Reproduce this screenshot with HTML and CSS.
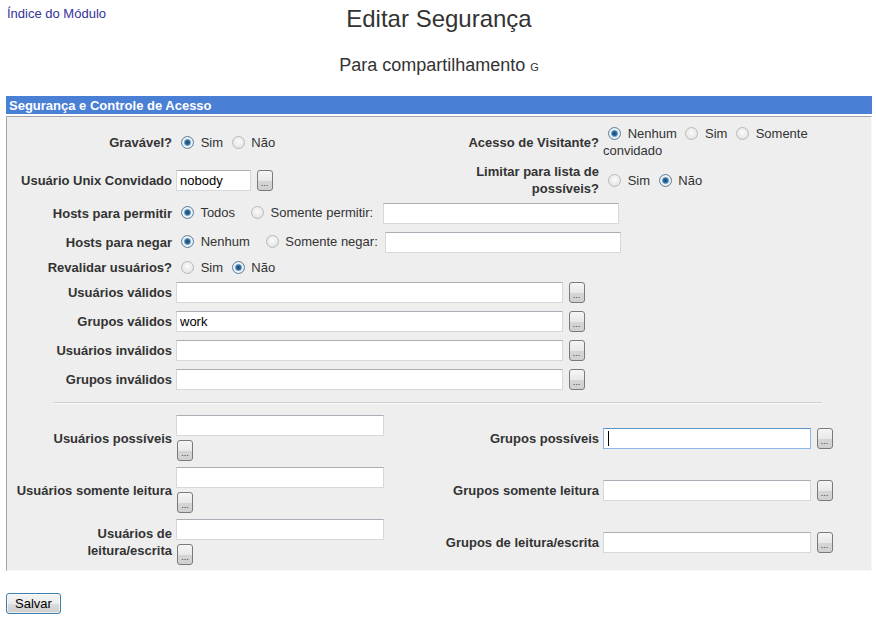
FILE: index.html
```html
<!DOCTYPE html>
<html lang="pt">
<head>
<meta charset="utf-8">
<title>Editar Segurança</title>
<link rel="stylesheet" href="styles.css">
</head>
<body>
<div class="page">
  <header class="top">
    <a class="index" href="#">Índice do Módulo</a>
    <h1 class="title">Editar Segurança</h1>
    <span></span>
  </header>
  <p class="subtitle">Para compartilhamento <small>G</small></p>

  <div class="bar">Segurança e Controle de Acesso</div>
  <div class="panel">
    <div class="l">Gravável?</div>
    <div class="v"><input class="r" type="radio" name="wr" checked> <label>Sim</label> <input class="r" type="radio" name="wr"> <label>Não</label></div>
    <div class="l">Acesso de Visitante?</div>
    <div class="v pr"><input class="r" type="radio" name="ga" checked> <label>Nenhum</label> <input class="r" type="radio" name="ga"> <label>Sim</label> <input class="r" type="radio" name="ga"> <label>Somente</label> <label>convidado</label></div>

    <div class="l">Usuário Unix Convidado</div>
    <div class="v"><input class="t w75" type="text" value="nobody"> <button class="dots">...</button></div>
    <div class="l">Limitar para lista de possíveis?</div>
    <div class="v"><input class="r" type="radio" name="lim"> <label>Sim</label> <input class="r" type="radio" name="lim" checked> <label>Não</label></div>

    <div class="l">Hosts para permitir</div>
    <div class="v wide"><input class="r" type="radio" name="ha" checked> <label>Todos</label> &nbsp; <input class="r" type="radio" name="ha"> <label>Somente permitir:</label> <input class="t w236 sp2" type="text"></div>

    <div class="l">Hosts para negar</div>
    <div class="v wide"><input class="r" type="radio" name="hd" checked> <label>Nenhum</label> &nbsp; <input class="r" type="radio" name="hd"> <label>Somente negar:</label> <input class="t w236 sp" type="text"></div>

    <div class="l">Revalidar usuários?</div>
    <div class="v wide"><input class="r" type="radio" name="rv"> <label>Sim</label> <input class="r" type="radio" name="rv" checked> <label>Não</label></div>

    <div class="l">Usuários válidos</div>
    <div class="v wide"><input class="t w387" type="text"> <button class="dots">...</button></div>

    <div class="l">Grupos válidos</div>
    <div class="v wide"><input class="t w387" type="text" value="work"> <button class="dots">...</button></div>

    <div class="l">Usuários inválidos</div>
    <div class="v wide"><input class="t w387" type="text"> <button class="dots">...</button></div>

    <div class="l">Grupos inválidos</div>
    <div class="v wide"><input class="t w387" type="text"> <button class="dots">...</button></div>

    <div class="sep"><i></i></div>

    <div class="l">Usuários possíveis</div>
    <div class="v stack"><input class="t w208" type="text"><button class="dots">...</button></div>
    <div class="l">Grupos possíveis</div>
    <div class="v"><span class="focus-wrap"><input class="t w208 focus" type="text"><span class="caret"></span></span> <button class="dots">...</button></div>

    <div class="l">Usuários somente leitura</div>
    <div class="v stack"><input class="t w208" type="text"><button class="dots">...</button></div>
    <div class="l">Grupos somente leitura</div>
    <div class="v"><input class="t w208" type="text"> <button class="dots">...</button></div>

    <div class="l">Usuários de leitura/escrita</div>
    <div class="v stack"><input class="t w208" type="text"><button class="dots">...</button></div>
    <div class="l">Grupos de leitura/escrita</div>
    <div class="v"><input class="t w208" type="text"> <button class="dots">...</button></div>
  </div>

  <button class="save">Salvar</button>
</div>
</body>
</html>
```
FILE: styles.css
```css
html, body {
  margin: 0;
  padding: 0;
  background: #fff;
}
body {
  font-family: "Liberation Sans", Arial, sans-serif;
  font-size: 13px;
  color: #333;
}
.page {
  padding: 0 4px 0 6px;
}
.top {
  display: grid;
  grid-template-columns: 1fr auto 1fr;
  align-items: start;
  padding-top: 5px;
}
.index {
  margin-top: 1px;
  margin-left: 1px;
  line-height: 15px;
  color: #333399;
  text-decoration: none;
  justify-self: start;
}
.title {
  margin: 0;
  font-size: 24px;
  font-weight: normal;
  line-height: 28px;
  color: #333;
}
.subtitle {
  margin: 22px 0 18px;
  text-align: center;
  font-size: 18px;
  line-height: 21px;
  color: #333;
}
.subtitle small {
  font-size: 11px;
}
.bar {
  height: 18px;
  box-sizing: border-box;
  padding: 2px 3px 1px;
  line-height: 15px;
  background: #4a7fd6;
  color: #fff;
  font-weight: bold;
}
.panel {
  margin-top: 2px;
  background: #eeeeee;
  border-top: 1px solid #a4a4a4;
  border-left: 1px solid #a4a4a4;
  border-right: 1px solid #f8f8f8;
  border-bottom: 1px solid #f8f8f8;
  padding: 6px 0 2px;
  display: grid;
  grid-template-columns: 167px 262px 165px 1fr;
  align-items: center;
  line-height: 17px;
}
.l {
  padding: 2px 2px 2px 5px;
  text-align: right;
  font-weight: bold;
  color: #333;
}
.v {
  padding: 2px;
  color: #333;
}
.v.pr {
  padding-right: 8px;
}
.v.wide {
  grid-column: span 3;
}
.sep {
  grid-column: 1 / -1;
  height: 18px;
  display: flex;
  align-items: center;
}
.sep i {
  display: block;
  width: 769px;
  margin-left: 46px;
  border-top: 1px solid #cfcfcf;
  border-bottom: 1px solid #fafafa;
}
.r {
  -webkit-appearance: none;
  appearance: none;
  width: 13px;
  height: 13px;
  box-sizing: border-box;
  margin: 0 3px 0 5px;
  vertical-align: -2px;
  border-radius: 50%;
  border: 1px solid #b9b9b9;
  background: radial-gradient(circle at 50% 40%, #fbfbfb 0, #e9e9e9 60%, #dcdcdc 100%);
}
.r:checked {
  border-color: #5b7f9e;
  background: radial-gradient(circle at 50% 50%, #16476f 0, #2d6a9c 2.2px, #7fb2dc 3.2px, #f2f2f2 4px, #dedede 100%);
}
.t {
  height: 21px;
  box-sizing: border-box;
  margin: 2px 0;
  padding: 0 3px;
  border: 1px solid #d5d9de;
  border-top-color: #a9aeb5;
  background: #fff;
  font-family: "Liberation Sans", Arial, sans-serif;
  font-size: 13px;
  color: #000;
  vertical-align: middle;
  outline: none;
}
.t.sp {
  margin-left: 4px;
}
.t.sp2 {
  margin-left: 6px;
}
.t.focus {
  border-color: #8ab8e6;
  border-top-color: #5c93c9;
}
.w75 { width: 75px; }
.w208 { width: 208px; }
.w236 { width: 236px; }
.w387 { width: 387px; }
.dots {
  width: 16px;
  height: 21px;
  box-sizing: border-box;
  margin: 2px 0 2px 2px;
  padding: 5px 0 0;
  border: 1px solid #7a7a7a;
  border-radius: 3px;
  background: linear-gradient(#f6f6f6, #e8e8e8 50%, #d6d6d6 51%, #d0d0d0);
  font-family: "Liberation Sans", Arial, sans-serif;
  font-size: 9px;
  line-height: 10px;
  color: #333;
  vertical-align: middle;
}
.stack .t {
  display: block;
  margin: 1px 0 0;
}
.stack .dots {
  display: block;
  margin: 4px 0 1px 1px;
}
.focus-wrap {
  position: relative;
  display: inline-block;
  vertical-align: middle;
  line-height: 0;
}
.focus-wrap .t {
  display: block;
}
.caret {
  position: absolute;
  left: 5px;
  top: 5px;
  width: 1px;
  height: 15px;
  background: #000;
}
.save {
  display: block;
  margin-top: 22px;
  width: 55px;
  height: 21px;
  box-sizing: border-box;
  padding: 0;
  border: 1px solid #3c7fb1;
  border-radius: 3px;
  background: linear-gradient(#f4f4f4, #ebebeb 50%, #dddddd 51%, #cfcfcf);
  box-shadow: inset 0 0 0 1px rgba(255, 255, 255, 0.6);
  font-family: "Liberation Sans", Arial, sans-serif;
  font-size: 13px;
  color: #000;
}
```
